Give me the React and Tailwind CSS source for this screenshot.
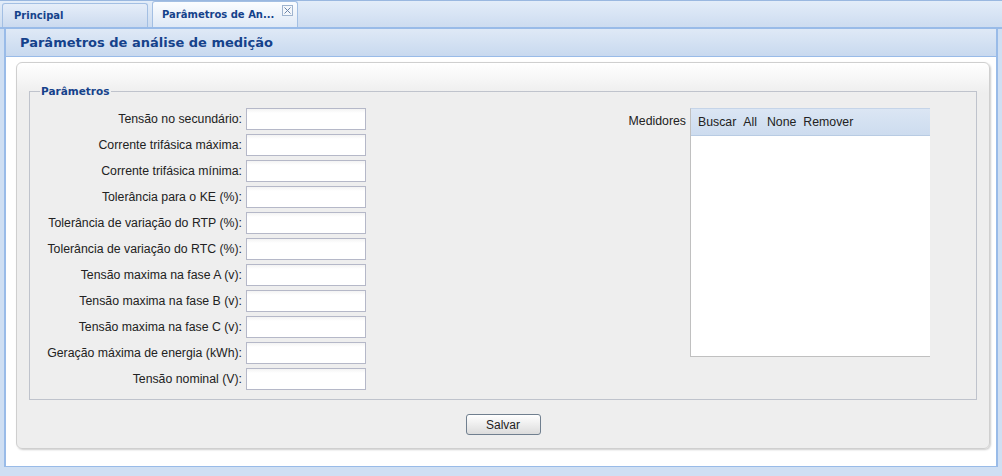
import React from "react";

const fields = [
  "Tensão no secundário:",
  "Corrente trifásica máxima:",
  "Corrente trifásica mínima:",
  "Tolerância para o KE (%):",
  "Tolerância de variação do RTP (%):",
  "Tolerância de variação do RTC (%):",
  "Tensão maxima na fase A (v):",
  "Tensão maxima na fase B (v):",
  "Tensão maxima na fase C (v):",
  "Geração máxima de energia (kWh):",
  "Tensão nominal (V):",
];

const body = { fontFamily: "'Liberation Sans', Arial, sans-serif" };
const bold = { fontFamily: "'DejaVu Sans', Verdana, sans-serif" };

const App = () => {
  return (
    <div
      className="w-[1002px] h-[476px] overflow-hidden flex flex-col bg-[#f2f5fa] text-[12.3px] text-[#222]"
      style={body}
    >
      {/* tab strip */}
      <div className="h-[29px] shrink-0 flex items-end gap-[4px] pl-[2px] border-t border-[#9ab8e0] border-b-[2px] border-b-[#99bbe8] bg-gradient-to-b from-[#e3edf9] to-[#cddcf0]">
        <div
          className="w-[146px] h-[24px] flex items-center pl-[11px] rounded-t-[3px] border border-b-0 border-[#a3bfe3] bg-gradient-to-b from-[#e6eef9] to-[#cbdaef] text-[10px] font-bold text-[#15428b] whitespace-nowrap"
          style={bold}
        >
          Principal
        </div>
        <div
          className="w-[146px] h-[26px] flex items-center justify-between pl-[9px] pr-[4px] rounded-t-[3px] border border-b-0 border-[#a3bfe3] bg-gradient-to-b from-[#fbfdff] to-[#dfe9f6] text-[10px] font-bold text-[#15428b] whitespace-nowrap"
          style={bold}
        >
          <span>Parâmetros de An...</span>
          <span className="w-[11px] h-[11px] mb-[8px] flex items-center justify-center border border-[#9fb4cf] bg-[#f4f7fb]">
            <svg width="7" height="7" viewBox="0 0 7 7">
              <path d="M0.5 0.5 L6.5 6.5 M6.5 0.5 L0.5 6.5" stroke="#6a84a8" strokeWidth="1" />
            </svg>
          </span>
        </div>
      </div>

      {/* window */}
      <div className="flex-1 flex flex-col px-[4px] pb-[9px] bg-[#cfdff3]">
        <div className="flex-1 flex flex-col border-x-[2px] border-b-[1px] border-[#99bbe8]">
          <div
            className="h-[28px] shrink-0 flex items-center pl-[14px] border-b border-[#99bbe8] bg-gradient-to-b from-[#dfe9f6] to-[#c8d9ef] text-[13px] font-bold text-[#15428b]"
            style={bold}
          >
            Parâmetros de análise de medição
          </div>
          <div className="flex-1 bg-white pt-[5px] pl-[10px] pr-[6px] pb-[17px] flex">
            <div className="flex-1 flex flex-col rounded-[6px] border border-[#cfcfcf] shadow-[1px_1px_2px_rgba(0,0,0,0.2)] bg-[linear-gradient(to_bottom,#ffffff_0px,#eeeeee_30px)]">
              <fieldset className="mt-[21px] mx-[12px] h-[316px] border border-[#bfc3cc] px-[10px] pt-[8px] flex justify-between">
                <legend
                  className="px-[1px] text-[10.5px] font-bold text-[#15428b]"
                  style={bold}
                >
                  Parâmetros
                </legend>
                <div className="flex flex-col gap-[4px]">
                  {fields.map((f) => (
                    <div key={f} className="flex items-center gap-[4px]">
                      <label className="w-[202px] text-right whitespace-nowrap">{f}</label>
                      <input className="w-[120px] h-[22px] border border-[#b5b8c8] bg-white bg-[linear-gradient(to_bottom,#f3f3f3_0px,#ffffff_4px)] outline-none" />
                    </div>
                  ))}
                </div>
                <div className="flex gap-[4px] mr-[36px]">
                  <div className="pt-[4px]">Medidores</div>
                  <div className="w-[240px] h-[249px] flex flex-col border border-[#c0c0c0] border-t-[#c5d4e8] border-r-0 bg-white">
                    <div className="h-[27px] flex items-center gap-[7px] pl-[7px] border-b border-[#b8cbe3] bg-gradient-to-b from-[#dbe6f4] to-[#cddcef]">
                      <span>Buscar</span>
                      <span className="pr-[3px]">All</span>
                      <span>None</span>
                      <span>Remover</span>
                    </div>
                  </div>
                </div>
              </fieldset>
              <div className="flex justify-center mt-[14px]">
                <button className="w-[75px] h-[21px] rounded-[3px] border border-[#707f8f] bg-gradient-to-b from-[#ffffff] to-[#dcdcdc] text-[12px] text-[#222]">
                  Salvar
                </button>
              </div>
            </div>
          </div>
        </div>
      </div>
    </div>
  );
};

export default App;
